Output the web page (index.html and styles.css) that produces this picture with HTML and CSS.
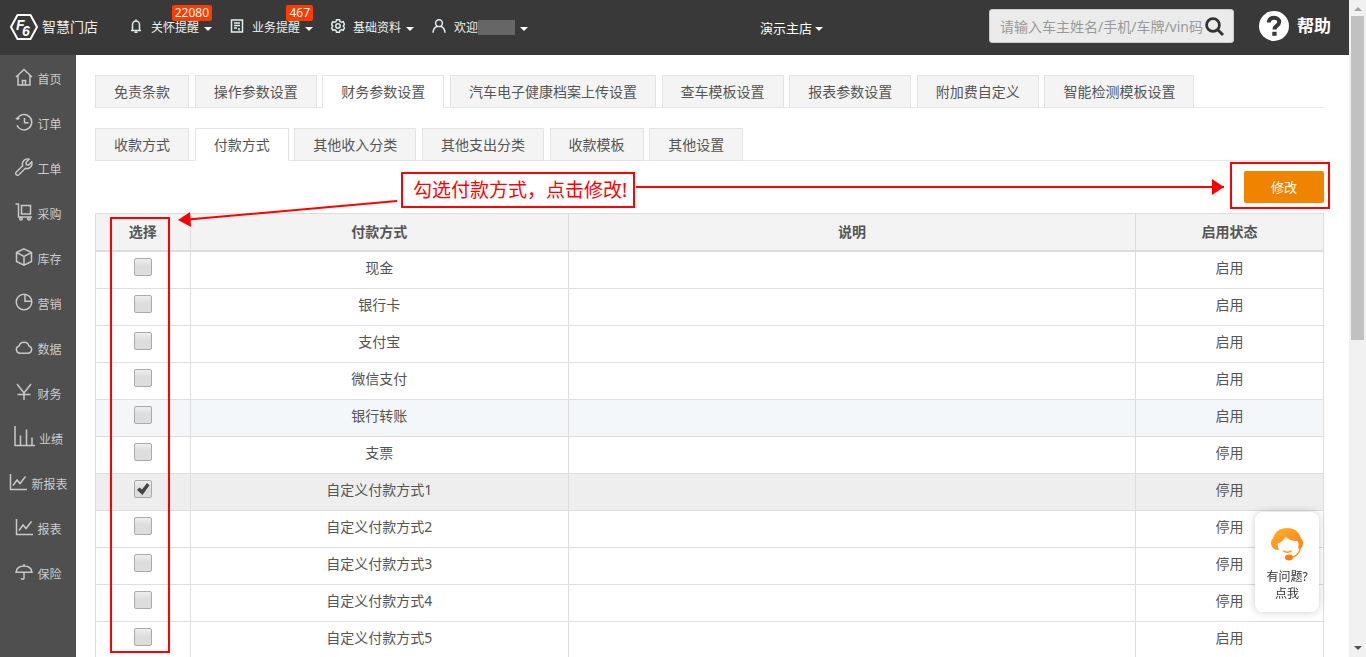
FILE: index.html
```html
<!DOCTYPE html>
<html lang="zh-CN">
<head>
<meta charset="utf-8">
<title>智慧门店</title>
<link rel="stylesheet" href="styles.css">
</head>
<body>
<div class="app">
  <header class="topbar">
    <a class="logo" href="#">
      <svg width="28" height="26" viewBox="0 0 28 26" fill="none" stroke="#fff" stroke-width="2" stroke-linejoin="round"><path d="M7.500 1h13L27 13l-6.500 12h-13L1 13z"/><g class="logo-mark" fill="#fff" stroke="none"><text x="6" y="16">F</text><text x="12" y="22">6</text></g></svg>
      <span>智慧门店</span>
    </a>
    <nav class="topnav">
      <button class="navitem" type="button"><svg class="ic" viewBox="0 0 14 14"><path d="M2 11.500h10M3.500 11V5.500a3.500 3.500 0 0 1 7 0V11M7 2V.5M5.500 13.300h3"/></svg><span>关怀提醒</span><i class="caret"></i><b class="badge">22080</b></button>
      <button class="navitem" type="button"><svg class="ic" viewBox="0 0 14 14"><path d="M1.500 1h11v12h-11zM4 4h6M4 6.500h6M4 9h3M9 9v2.500"/></svg><span>业务提醒</span><i class="caret"></i><b class="badge">467</b></button>
      <button class="navitem" type="button"><svg class="ic" viewBox="0 0 14 14"><path d="M5.500.8h3l.5 1.800 1.300.7 1.800-.6 1.400 2.500L12.300 7l1.200 1.800-1.400 2.500-1.800-.6-1.300.7-.5 1.800h-3L5 11.400l-1.300-.7-1.800.6L.5 8.800 1.700 7 .5 5.200l1.400-2.500 1.800.6L5 2.600z"/><circle cx="7" cy="7" r="2.200"/></svg><span>基础资料</span><i class="caret"></i></button>
      <button class="navitem" type="button"><svg class="ic" viewBox="0 0 14 14"><circle cx="7" cy="4.200" r="3.400"/><path d="M1 13.700c.3-3.600 2-5.600 4.300-6.400M13 13.700c-.3-3.600-2-5.600-4.300-6.400"/></svg><span class="welcome">欢迎<i class="mask"></i></span><i class="caret"></i></button>
    </nav>
    <button class="store" type="button"><span>演示主店</span><i class="caret"></i></button>
    <form class="search">
      <input type="text" aria-label="搜索" placeholder="请输入车主姓名/手机/车牌/vin码">
      <button type="button" aria-label="搜索"><svg width="19" height="19" viewBox="0 0 19 19" fill="none" stroke="#333" stroke-width="2.800"><circle cx="8" cy="8" r="6.400"/><path d="M12.500 12.500l5.500 5.500"/></svg></button>
    </form>
    <a class="help" href="#"><svg width="30" height="30" viewBox="0 0 30 30"><circle cx="15" cy="15" r="15" fill="#fff"/><path d="M9.800 11.500c.2-3.200 2.300-4.700 5.200-4.700 3.100 0 5.200 1.600 5.200 4.300 0 3.600-4.700 3.600-4.700 7.400" fill="none" stroke="#393939" stroke-width="4"/><path d="M13.300 20.800h4.300v4h-4.300z" fill="#393939"/></svg><span>帮助</span></a>
  </header>
  <div class="body">
    <nav class="sidebar">
      <a href="#"><svg class="si" viewBox="0 0 18 18"><path d="M1 9l8-7.500L17 9M3 7.500V17h12V7.500M7.500 17v-4.500h3V17"/></svg><span>首页</span></a>
      <a href="#"><svg class="si" viewBox="0 0 18 18"><path d="M2.300 5.500a7.700 7.700 0 1 1-.3 6.800M.8 5.200l1.700 1 2-.8M9.500 5v4.800h4"/></svg><span>订单</span></a>
      <a href="#"><svg class="si" viewBox="0 0 18 18"><path d="M14 1.300a5 5 0 0 0-6.300 6.400L1.300 14a1.700 1.700 0 0 0 2.600 2.700l6.400-6.400A5 5 0 0 0 16.700 4l-2.900 2.900-2.500-.2-.2-2.500z"/></svg><span>工单</span></a>
      <a href="#"><svg class="si" viewBox="0 0 18 18"><path d="M.5 1h3v13H17M6.500 2.500h9v8.500h-9z"/><circle cx="6" cy="15.700" r="1.300"/><circle cx="14" cy="15.700" r="1.300"/></svg><span>采购</span></a>
      <a href="#"><svg class="si" viewBox="0 0 18 18"><path d="M9 .9l7.500 3.600v9L9 17.100l-7.500-3.600v-9zM1.500 4.500L9 8.300l7.500-3.800M9 8.300v8.800"/></svg><span>库存</span></a>
      <a href="#"><svg class="si" viewBox="0 0 18 18"><circle cx="9" cy="9" r="7.800"/><path d="M10 1.200v7h7"/></svg><span>营销</span></a>
      <a href="#"><svg class="si" viewBox="0 0 18 18"><path d="M4.500 15.200A3.700 3.700 0 0 1 4 8a5.200 5.200 0 0 1 10 0 3.700 3.700 0 0 1-.5 7.200z"/></svg><span>数据</span></a>
      <a href="#"><svg class="si" viewBox="0 0 18 18"><path d="M2 1l7 9 7-9M9 10v7M2.500 11.500h13"/></svg><span>财务</span></a>
      <a href="#"><svg class="si si-wide" viewBox="0 0 21 21"><path d="M1 0v19.500h20M6.500 19.500V9.500M12.500 19.500v-16M18 19.500v-8"/></svg><span>业绩</span></a>
      <a href="#"><svg class="si" viewBox="0 0 18 18"><path d="M1.500 1v15.500H18M4 12.500l4-5.500 3 3.500 5.500-7"/></svg><span>新报表</span></a>
      <a href="#"><svg class="si" viewBox="0 0 18 18"><path d="M1.500 1v15.500H18M4 12.500l4-5.500 3 3.500 5.500-7"/></svg><span>报表</span></a>
      <a href="#"><svg class="si" viewBox="0 0 18 18"><path d="M1 9.300C1.500 5 4.800 3 9 3s7.500 2 8 6.300zM9 3V1M9 9.300V15c0 1.500-2.500 1.800-2.800.2"/></svg><span>保险</span></a>
    </nav>
    <main class="main">
      <ul class="tabs">
        <li><a href="#">免责条款</a></li>
        <li><a href="#">操作参数设置</a></li>
        <li class="on"><a href="#">财务参数设置</a></li>
        <li><a href="#">汽车电子健康档案上传设置</a></li>
        <li><a href="#">查车模板设置</a></li>
        <li><a href="#">报表参数设置</a></li>
        <li><a href="#">附加费自定义</a></li>
        <li><a href="#">智能检测模板设置</a></li>
      </ul>
      <ul class="tabs">
        <li><a href="#">收款方式</a></li>
        <li class="on"><a href="#">付款方式</a></li>
        <li><a href="#">其他收入分类</a></li>
        <li><a href="#">其他支出分类</a></li>
        <li><a href="#">收款模板</a></li>
        <li><a href="#">其他设置</a></li>
      </ul>
      <div class="actions">
        <div class="mark mark-button"><button class="modify" type="button">修改</button></div>
      </div>
      <table class="grid">
        <colgroup><col class="c1"><col class="c2"><col class="c3"><col class="c4"></colgroup>
        <thead><tr><th>选择</th><th>付款方式</th><th>说明</th><th>启用状态</th></tr></thead>
        <tbody>
          <tr><td><input type="checkbox" aria-label="现金"></td><td>现金</td><td></td><td>启用</td></tr>
          <tr><td><input type="checkbox" aria-label="银行卡"></td><td>银行卡</td><td></td><td>启用</td></tr>
          <tr><td><input type="checkbox" aria-label="支付宝"></td><td>支付宝</td><td></td><td>启用</td></tr>
          <tr><td><input type="checkbox" aria-label="微信支付"></td><td>微信支付</td><td></td><td>启用</td></tr>
          <tr class="hover"><td><input type="checkbox" aria-label="银行转账"></td><td>银行转账</td><td></td><td>启用</td></tr>
          <tr><td><input type="checkbox" aria-label="支票"></td><td>支票</td><td></td><td>停用</td></tr>
          <tr class="picked"><td><input type="checkbox" aria-label="自定义付款方式1" checked></td><td>自定义付款方式1</td><td></td><td>停用</td></tr>
          <tr><td><input type="checkbox" aria-label="自定义付款方式2"></td><td>自定义付款方式2</td><td></td><td>停用</td></tr>
          <tr><td><input type="checkbox" aria-label="自定义付款方式3"></td><td>自定义付款方式3</td><td></td><td>停用</td></tr>
          <tr><td><input type="checkbox" aria-label="自定义付款方式4"></td><td>自定义付款方式4</td><td></td><td>停用</td></tr>
          <tr><td><input type="checkbox" aria-label="自定义付款方式5"></td><td>自定义付款方式5</td><td></td><td>启用</td></tr>
        </tbody>
      </table>
      <div class="mark mark-column"></div>
      <div class="mark note">勾选付款方式，点击修改!</div>
      <svg class="arrow-left" width="220" height="32" viewBox="0 0 220 32"><path d="M219 6L10 24.500" stroke="#f00" stroke-width="2"/><path d="M0 25l12-8 1 15z" fill="#f00"/></svg>
      <div class="arrow-right"></div>
    </main>
  </div>
</div>
<div class="scrollbar"><i class="up"></i><div class="thumb"></div><i class="down"></i></div>
<button class="chat" type="button">
  <svg width="34" height="34" viewBox="0 0 34 34"><defs><linearGradient id="hair" x1="0" y1="0" x2="1" y2="1"><stop offset="0" stop-color="#ffb42e"/><stop offset="1" stop-color="#ff7d12"/></linearGradient></defs><path d="M3 11.500C4.500 5 10 1 17 1s12.500 4 14 10.500c1.500 1 2 2.500 2 4.500 0 3-1.500 5.500-4 6-.8-.5-.8-1.500-.5-3 .3-2 0-3.500-1-5-4 .5-9-1-12-4.500-1.500 3.500-4.500 6-8 7 0 2 .7 4 1.500 6C5 24 1 20.500 1 16c0-2 .5-3.500 2-4.500z" fill="url(#hair)"/><path d="M13 23.500c2 2.400 6.500 2.400 8.500 0" fill="none" stroke="#ff9a20" stroke-width="1.400"/><path d="M30.500 20c-.7 6-4 9.500-10 10.500" fill="none" stroke="#ff8c1a" stroke-width="1.500"/><ellipse cx="19" cy="30.500" rx="4" ry="3" fill="#ff7d12"/></svg>
  <span>有问题?</span><span>点我</span>
</button>
</body>
</html>
```
FILE: styles.css
```css
* { box-sizing: border-box; }
html, body { height: 100%; }
body {
  margin: 0;
  display: flex;
  overflow: hidden;
  background: #fff;
  color: #555;
  font: 14px/20px "Noto Sans", "Noto Sans CJK SC", sans-serif;
}
a { color: inherit; text-decoration: none; }
button { margin: 0; padding: 0; border: 0; background: none; color: inherit; font: inherit; cursor: pointer; }
.app { flex: 1; min-width: 0; display: flex; flex-direction: column; }

/* top bar */
.topbar { flex: none; height: 55px; display: flex; align-items: center; padding: 0 18px 0 10px; background: #393939; color: #fff; }
.logo { display: flex; align-items: center; gap: 4px; width: 119px; margin-bottom: 2px; }
.logo span { color: #eee; }
.logo-mark { font: italic bold 14px "Liberation Sans", sans-serif; }
.topnav { display: flex; gap: 18px; }
.navitem { position: relative; display: flex; align-items: center; gap: 5px; height: 55px; font-size: 12px; color: #e9f3f1; }
.ic { width: 14px; height: 14px; margin: 0 3px 3px 0; fill: none; stroke: #dfeeee; stroke-width: 1.5; }
.caret { border: 4px solid transparent; border-top-color: #fff; border-bottom: 0; margin-top: 3px; }
.badge { position: absolute; right: 0; top: 5px; padding: 0 3px; border-radius: 2px; background: #ff3b00; color: #fff; font-size: 12px; font-weight: normal; line-height: 16px; }
.welcome { display: flex; align-items: center; }
.mask { width: 37px; height: 15px; background: #666; }
.store { display: flex; align-items: center; gap: 3px; margin-left: 232px; font-size: 13px; }
.search { display: flex; align-items: center; width: 245px; height: 34px; margin-left: auto; border: 1px solid #ccc; border-radius: 3px; background: #ebebeb; }
.search input { flex: 1; min-width: 0; height: 32px; padding: 0 0 0 10px; border: 0; background: none; color: #555; font: inherit; outline: 0; }
.search input::placeholder { color: #999; opacity: 1; }
.search button { display: flex; margin-right: 9px; }
.help { display: flex; align-items: center; gap: 8px; margin-left: 25px; font-size: 17px; font-weight: bold; }
.search, .help { margin-bottom: 3px; }

/* layout */
.body { flex: 1; min-height: 0; display: flex; }
.sidebar { flex: none; width: 76px; padding-left: 1px; background: #4f4f4f; color: #ccc; font-size: 12px; }
.sidebar a { display: flex; justify-content: center; align-items: center; gap: 4px; height: 45px; }
.sidebar span { padding-top: 4px; }
.si { width: 18px; height: 18px; margin-bottom: 2px; fill: none; stroke: #c8c8c8; stroke-width: 1.5; }
.si-wide { width: 21px; height: 21px; }
.main { position: relative; flex: 1; min-width: 0; overflow: hidden; padding: 20px 25px 0 19px; }

/* tabs */
.tabs { margin: 0 0 20px; padding: 0; height: 33px; list-style: none; border-bottom: 1px solid #e7e7e7; white-space: nowrap; }
.tabs li { display: inline-block; margin-right: 2px; vertical-align: top; }
.tabs a { display: block; height: 33px; padding: 0 18px; border: 1px solid #e3e3e3; background: #f4f4f4; line-height: 32px; }
.tabs .on a { background: #fff; border-bottom-color: #fff; }

.actions { display: flex; justify-content: flex-end; height: 52px; margin-top: -20px; }
.modify { width: 80px; height: 32px; border-radius: 2px; background: #f08400; color: #fff; font-size: 13px; }

/* table */
.grid { width: 100%; table-layout: fixed; border-collapse: collapse; text-align: center; }
.c1 { width: 7.7%; }
.c2 { width: 30.8%; }
.c3 { width: 46.2%; }
.c4 { width: 15.3%; }
.grid th, .grid td { border: 1px solid #ddd; }
.grid th { height: 37px; padding: 0; background: #f3f3f3; border-bottom-width: 2px; }
.grid td { height: 37px; padding: 6px 0 10px; vertical-align: top; }
.grid .hover td { background: #f3f7fa; }
.grid .picked td { background: #eee; }
.grid input {
  appearance: none;
  display: block;
  width: 18px;
  height: 18px;
  margin: 0 auto;
  border: 1px solid #aaa;
  border-radius: 2px;
  background: linear-gradient(#eee, #ddd 45%);
}
.grid input:checked {
  background: url("data:image/svg+xml,%3Csvg xmlns='http://www.w3.org/2000/svg' viewBox='0 0 16 16'%3E%3Cpath d='M2 9l2.500-2.500L7 8.500 12 2l2.500 2.200L7.500 14z' fill='%23444'/%3E%3C/svg%3E"), linear-gradient(#eee, #ddd 45%);
}

/* walkthrough marks */
.mark { border: 2px solid #f00; }
.mark-button { width: 100px; height: 47px; margin: 1px -6px 0 0; padding: 7px 3px 0 12px; }
.mark-column { position: absolute; left: 34px; top: 162px; width: 60px; height: 436px; }
.note { position: absolute; left: 325px; top: 117px; padding: 0 6px 0 10px; color: #f00; font-size: 19px; line-height: 32px; white-space: nowrap; background: #fff; }
.arrow-left { position: absolute; left: 102px; top: 140px; }
.arrow-right { position: absolute; left: 560px; right: 125px; top: 131px; height: 2px; background: #f00; }
.arrow-right::after { content: ""; position: absolute; right: 0; top: -7px; border: 8px solid transparent; border-left: 12px solid #f00; border-right: 0; }

/* page scrollbar */
.scrollbar { flex: none; width: 17px; display: flex; flex-direction: column; align-items: center; padding: 7px 0; background: #f1f1f1; }
.thumb { width: 13px; height: 324px; margin-top: 5px; background: #c1c1c1; }
.up, .down { border: 4px solid transparent; }
.up { border-top: 0; border-bottom-color: #a3a3a3; }
.down { border-bottom: 0; border-top-color: #505050; margin-top: auto; }

/* support widget */
.chat { position: fixed; right: 47px; bottom: 45px; width: 64px; height: 100px; display: flex; flex-direction: column; align-items: center; border-radius: 8px; background: #fff; box-shadow: 0 0 8px rgba(0, 0, 0, .2); color: #333; font-size: 12px; line-height: 17px; padding-top: 15px; }
.chat svg { margin-bottom: 7px; }
```
